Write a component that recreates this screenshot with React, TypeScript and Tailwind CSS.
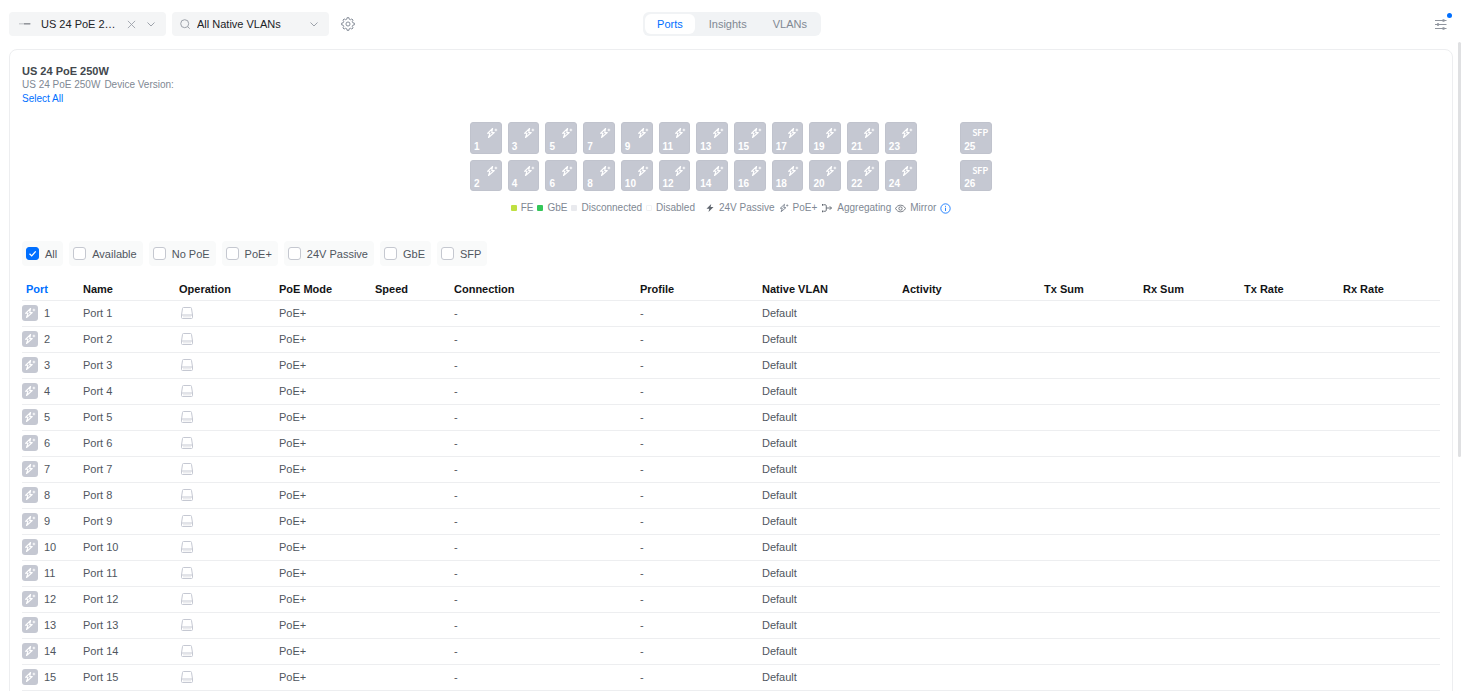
import { useState } from "react";
import type { ReactNode } from "react";

interface IconProp {
  className?: string,
}

interface TabProp {
  label: string,
  active: boolean,
  onSelect: () => void,
}

interface FilterProp {
  label: string,
  checked: boolean,
  onToggle: () => void,
}

const PoePlusIcon = ({ className } : IconProp) => (
  <svg viewBox="0 0 20 20" className={className} fill="none" stroke="currentColor" strokeWidth="1.9" strokeLinejoin="round">
    <path d="M11 2.500 2.500 10.500h4.200L4.200 17.500l9.600-8.200H9.500z" />
    <path d="M16.500 2.800v4.400M14.300 5h4.400" strokeWidth="1.500" />
  </svg>
);

const BoltIcon = ({ className } : IconProp) => (
  <svg viewBox="0 0 20 20" className={className} fill="currentColor">
    <path d="M12.500 2 3 11.600h5.600L7 18l10-9.800h-5.800z" />
  </svg>
);

const AggregatingIcon = ({ className } : IconProp) => (
  <svg viewBox="0 0 22 20" className={className} fill="none" stroke="currentColor" strokeWidth="1.8">
    <path d="M4 3.500h3.500a2 2 0 0 1 2 2v9a2 2 0 0 1-2 2H4M9.500 10H20M16.500 6.500 20 10l-3.500 3.500" />
    <path d="M1 3.500h2.500M1 16.500h2.500" strokeWidth="3.500" />
  </svg>
);

const EyeIcon = ({ className } : IconProp) => (
  <svg viewBox="0 0 20 20" className={className} fill="none" stroke="currentColor" strokeWidth="1.5">
    <path d="M1 10c2-4 5.200-6 9-6s7 2 9 6c-2 4-5.200 6-9 6s-7-2-9-6z" />
    <circle cx="10" cy="10" r="3" />
  </svg>
);

const InfoIcon = ({ className } : IconProp) => (
  <svg viewBox="0 0 20 20" className={className} fill="none" stroke="currentColor" strokeWidth="1.5">
    <circle cx="10" cy="10" r="8.500" />
    <path d="M10 8.500v6M10 5.200v1.800" />
  </svg>
);

const ChevronIcon = ({ className } : IconProp) => (
  <svg viewBox="0 0 10 10" className={className} fill="none" stroke="currentColor">
    <path d="m1.500 3.500 3.500 3.500 3.500-3.500" />
  </svg>
);

const CloseIcon = ({ className } : IconProp) => (
  <svg viewBox="0 0 10 10" className={className} fill="none" stroke="currentColor">
    <path d="m1 1 8 8M9 1 1 9" />
  </svg>
);

const SearchIcon = ({ className } : IconProp) => (
  <svg viewBox="0 0 12 12" className={className} fill="none" stroke="currentColor">
    <circle cx="5.700" cy="5.700" r="4" />
    <path d="m8.500 8.500 2.200 2.200" />
  </svg>
);

// eight teeth, four corners each
const gearPoints = Array.from({ length: 32 }, (_, i) => {
  const corner = i % 4;
  const radius = corner < 2 ? 11 : 8.600;
  const offset = [-8, 8, 13, 32][corner];
  const angle = ((Math.floor(i / 4) * 45 + offset) * Math.PI) / 180;
  return `${(12 + radius * Math.cos(angle)).toFixed(2)},${(12 + radius * Math.sin(angle)).toFixed(2)}`;
}).join(" ");

const GearIcon = ({ className } : IconProp) => (
  <svg viewBox="0 0 24 24" className={className} fill="none" stroke="currentColor" strokeWidth="1.600" strokeLinejoin="round">
    <polygon points={gearPoints} />
    <circle cx="12" cy="12" r="3.500" />
  </svg>
);

const SlidersIcon = ({ className } : IconProp) => (
  <svg viewBox="0 0 12 11" className={className} fill="none" stroke="currentColor">
    <path d="M0 1.500h11.500M0 5.500h11.500M0 9.500h11.500" />
    <path d="M7.500 1.500h2M2 5.500h2M7.500 9.500h2" strokeWidth="2.500" />
  </svg>
);

const DeviceIcon = ({ className } : IconProp) => (
  <svg viewBox="0 0 12 4" className={className}>
    <path d="M0 1h12v1.500H0z" fill="#cfd1d4" />
    <path d="M5 1h6v1.500H5z" fill="#94979c" />
  </svg>
);

const ClientIcon = ({ className } : IconProp) => (
  <svg viewBox="0 0 12 12" className={className} fill="none" stroke="currentColor">
    <path d="M.5 8 1.500 1.500a1 1 0 0 1 1-1h7a1 1 0 0 1 1 1L11.500 8v2.500a1 1 0 0 1-1 1h-9a1 1 0 0 1-1-1z" />
    <path d="M.5 8h11" />
    <path d="M2.500 9.800h7" strokeDasharray="1 1" />
  </svg>
);

const Tab = ({ label, active, onSelect } : TabProp) => (
  <button
    role="tab"
    aria-selected={active}
    onClick={onSelect}
    className={active ? "px-3 rounded-md bg-white text-[#006fff]" : "px-3 rounded-md text-[#808893]"}
  >
    {label}
  </button>
);

const Filter = ({ label, checked, onToggle } : FilterProp) => (
  <label className="flex items-center gap-1.5 h-[25px] pl-1 pr-1.5 rounded bg-[#f9fafa]">
    <span className="grid">
      <input
        type="checkbox"
        checked={checked}
        onChange={onToggle}
        className="col-start-1 row-start-1 appearance-none size-[13px] rounded-[3px] border border-[#c5c8d0] bg-white checked:bg-[#006fff] checked:border-[#006fff]"
      />
      {checked && (
        <svg viewBox="0 0 13 13" className="col-start-1 row-start-1 size-[13px] pointer-events-none" fill="none" stroke="white" strokeWidth="1.300">
          <path d="m3.500 6.700 2.200 2.200 4-4.500" />
        </svg>
      )}
    </span>
    {label}
  </label>
);

const PortTile = ({ port, sfp } : { port: number, sfp?: boolean }) => (
  <button className="flex flex-col justify-between aspect-square px-[3px] pt-1 rounded-[3px] border border-[#c0c3cd] bg-[#c5c8d2] text-white text-[10px] leading-3 font-bold">
    <span className="flex justify-end h-3 text-[9px] font-['Lato',sans-serif]">
      {sfp ? "SFP" : <PoePlusIcon className="size-3" />}
    </span>
    <span className="text-left">{port}</span>
  </button>
);

const LegendItem = ({ icon, label } : { icon: ReactNode, label: string }) => (
  <li className="flex items-center gap-1">
    {icon}
    {label}
  </li>
);

const TABS = ["Ports", "Insights", "VLANs"];
const FILTERS = ["All", "Available", "No PoE", "PoE+", "24V Passive", "GbE", "SFP"];

const COLUMNS = [
  { label: "Port", width: "w-[61px]" },
  { label: "Name", width: "w-[96px]" },
  { label: "Operation", width: "w-[100px]" },
  { label: "PoE Mode", width: "w-[96px]" },
  { label: "Speed", width: "w-[79px]" },
  { label: "Connection", width: "w-[186px]" },
  { label: "Profile", width: "w-[122px]" },
  { label: "Native VLAN", width: "w-[140px]" },
  { label: "Activity", width: "w-[142px]" },
  { label: "Tx Sum", width: "w-[99px]" },
  { label: "Rx Sum", width: "w-[101px]" },
  { label: "Tx Rate", width: "w-[99px]" },
  { label: "Rx Rate", width: "w-[97px]" },
];

const ports = Array.from({ length: 24 }, (_, i) => i + 1);
const oddPorts = ports.filter((port) => port % 2 === 1);
const evenPorts = ports.filter((port) => port % 2 === 0);

const App = () => {
  const [tab, setTab] = useState("Ports");
  const [filter, setFilter] = useState("All");

  return (
    <div className="flex flex-col h-screen pb-[9px] bg-white text-[11px] leading-[14px] text-[#50565e] font-['Liberation_Sans',Arial,sans-serif]">
      <header className="grid grid-cols-[1fr_auto_1fr] items-center pt-3 pb-1.5 px-[9px]">
        <div className="flex items-center gap-1.5">
          <div className="flex items-center w-[157px] h-6 px-2.5 rounded bg-[#f4f5f6]">
            <DeviceIcon className="w-3 h-1 flex-none" />
            <select aria-label="Device" className="appearance-none flex-1 min-w-0 ml-2.5 truncate text-[#212327]">
              <option>US 24 PoE 250W</option>
            </select>
            <button aria-label="Clear device" className="ml-2.5 text-[#9da2aa]">
              <CloseIcon className="size-[9px]" />
            </button>
            <ChevronIcon className="size-2.5 ml-2.5 flex-none text-[#9da2aa]" />
          </div>
          <div className="flex items-center w-[157px] h-6 pl-[7px] pr-2.5 rounded bg-[#f4f5f6]">
            <SearchIcon className="size-3 flex-none text-[#9da2aa]" />
            <select aria-label="Native VLAN" className="appearance-none flex-1 min-w-0 ml-1.5 text-[#212327]">
              <option>All Native VLANs</option>
            </select>
            <ChevronIcon className="size-2.5 flex-none text-[#9da2aa]" />
          </div>
          <button aria-label="Settings" className="ml-1.5 text-[#808893]">
            <GearIcon className="size-[14px]" />
          </button>
        </div>
        <div role="tablist" className="flex gap-0.5 h-6 p-0.5 rounded-md bg-[#f1f3f5]">
          {TABS.map((label) => (
            <Tab key={label} label={label} active={tab === label} onSelect={() => setTab(label)} />
          ))}
        </div>
        <button aria-label="Filters" className="relative justify-self-end mr-2 text-[#90959e]">
          <SlidersIcon className="w-3 h-[11px]" />
          <span className="absolute -top-1.5 -right-[5px] size-[5px] rounded-full bg-[#006fff]" />
        </button>
      </header>

      <div className="flex flex-1 min-h-0 pl-[9px] pr-[3px]">
        <main className="flex-1 min-w-0 pt-[7px] overflow-y-auto [scrollbar-width:none]">
          <section className="px-3 pt-3.5 pb-16 rounded-lg border border-[#edeef0]">
            <h1 className="font-bold text-[#42474d]">US 24 PoE 250W</h1>
            <p className="flex gap-1 text-[10px] text-[#808893]">
              <span>US 24 PoE 250W</span>
              <span>Device Version:</span>
            </p>
            <button className="block text-[10px] text-[#006fff]">Select All</button>

            <div className="grid grid-cols-14 gap-1.5 w-[522px] mt-4 mx-auto">
              {oddPorts.map((port) => <PortTile key={port} port={port} />)}
              <span />
              <PortTile port={25} sfp />
              {evenPorts.map((port) => <PortTile key={port} port={port} />)}
              <span />
              <PortTile port={26} sfp />
            </div>

            <ul className="flex justify-center items-center gap-1 mt-2.5 text-[10px] text-[#808893]">
              <LegendItem icon={<span className="size-1.5 rounded-[1px] bg-[#bfe042]" />} label="FE" />
              <LegendItem icon={<span className="size-1.5 rounded-[1px] bg-[#34c759]" />} label="GbE" />
              <LegendItem icon={<span className="size-1.5 rounded-[1px] bg-[#e9eaee]" />} label="Disconnected" />
              <LegendItem icon={<span className="size-1.5 rounded-[1px] border border-[#f1f2f4]" />} label="Disabled" />
              <li className="flex items-center gap-1 ml-1.5"><BoltIcon className="size-2.5 text-[#5f656e]" />24V Passive</li>
              <LegendItem icon={<PoePlusIcon className="size-2.5" />} label="PoE+" />
              <LegendItem icon={<AggregatingIcon className="w-3 h-2.5 text-[#5f656e]" />} label="Aggregating" />
              <LegendItem icon={<EyeIcon className="size-[11px] text-[#5f656e]" />} label="Mirror" />
              <li><InfoIcon className="size-[11px] text-[#006fff]" /></li>
            </ul>

            <div className="flex gap-1.5 mt-[26px]">
              {FILTERS.map((label) => (
                <Filter key={label} label={label} checked={filter === label} onToggle={() => setFilter(label)} />
              ))}
            </div>

            <table className="w-full mt-3 table-fixed border-collapse text-left">
              <thead>
                <tr className="h-[22px] border-b border-[#edeef0] text-[#131416]">
                  {COLUMNS.map(({ label, width }) => (
                    <th key={label} className={`${width} font-bold first:pl-1 first:text-[#006fff]`}>{label}</th>
                  ))}
                </tr>
              </thead>
              <tbody>
                {ports.map((port) => (
                  <tr key={port} className="h-[26px] border-b border-[#edeef0]">
                    <td>
                      <span className="flex items-center gap-1.5">
                        <span className="grid place-items-center size-4 rounded-[3px] bg-[#c5c8d2] text-white">
                          <PoePlusIcon className="size-3" />
                        </span>
                        {port}
                      </span>
                    </td>
                    <td>Port {port}</td>
                    <td><ClientIcon className="size-3 ml-0.5 text-[#c5c8d2]" /></td>
                    <td>PoE+</td>
                    <td />
                    <td>-</td>
                    <td>-</td>
                    <td>Default</td>
                    <td />
                    <td />
                    <td />
                    <td />
                    <td />
                  </tr>
                ))}
              </tbody>
            </table>
          </section>
        </main>
        <div className="w-[3px] ml-[5px]">
          <div className="h-[64%] rounded-full bg-[#dfe0e2]" />
        </div>
      </div>
    </div>
  );
};


export default App;
